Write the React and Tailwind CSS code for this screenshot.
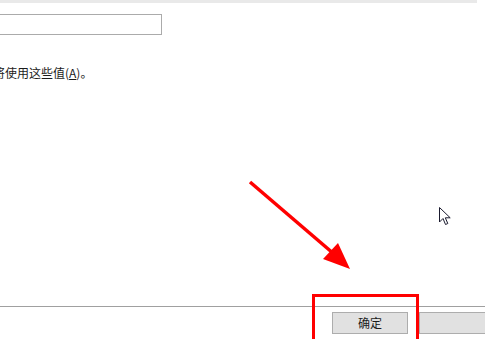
import React from 'react';

const font = { fontFamily: '"Noto Sans CJK SC", "Microsoft YaHei", sans-serif' };

// Red annotation arrow drawn over the dialog
const Arrow = () => (
  <svg className="absolute left-0 top-0 pointer-events-none" width="485" height="339">
    <line x1="250" y1="182" x2="334" y2="254" stroke="#ff0000" strokeWidth="3.5" />
    <polygon points="350,269 323,259 338,243" fill="#ff0000" />
  </svg>
);

// Mouse pointer
const Cursor = () => (
  <svg className="absolute left-[439px] top-[207px]" width="14" height="20" viewBox="0 0 14 20">
    <path
      d="M0.5 0.5 L0.5 15 L4 11.5 L6.5 17.5 L8.8 16.5 L6.3 10.8 L11.2 10.8 Z"
      fill="#ffffff"
      stroke="#1a1a2e"
      strokeWidth="1"
      strokeLinejoin="miter"
    />
  </svg>
);

const App = () => {
  return (
    <div className="relative w-[485px] h-[339px] overflow-hidden bg-white flex flex-col text-[#1b1b1b]" style={font}>
      <div className="h-[3px] w-[477px] bg-[#e9e9e9] shrink-0" />

      {/* Text field */}
      <div className="mt-[11px] ml-[-1px] w-[163px] h-[21px] border border-[#ababab] bg-white shrink-0" />

      {/* Hint text */}
      <p className="mt-[30px] ml-[-7px] text-[12px] leading-[16px] whitespace-nowrap shrink-0">
        将使用这些值(<span className="underline">A</span>)。
      </p>

      <div className="flex-1" />

      {/* Separator + buttons */}
      <div className="h-px bg-[#a0a0a0] shrink-0" />
      <div className="flex mt-[5px] mb-[5px] shrink-0">
        <button
          className="ml-[332px] w-[76px] h-[22px] border border-[#adadad] bg-[#e1e1e1] text-[12px] leading-none text-[#1b1b1b]"
          style={font}
        >
          确定
        </button>
        <div className="ml-[11px] flex-1 h-[22px] border border-r-0 border-[#adadad] bg-[#e1e1e1]" />
      </div>

      {/* Red highlight box */}
      <div className="absolute left-[312px] top-[294px] w-[107px] h-[60px] border-[3.5px] border-[#ff0000] pointer-events-none" />

      <Arrow />
      <Cursor />
    </div>
  );
};

export default App;
